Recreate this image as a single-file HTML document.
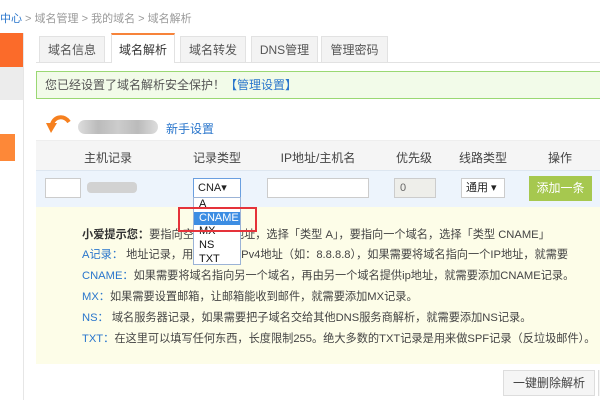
<!DOCTYPE html>
<html><head><meta charset="utf-8"><style>
*{margin:0;padding:0;box-sizing:border-box}
html,body{width:600px;height:400px;overflow:hidden}
body{background:#fff;font-family:"Liberation Sans","Noto Sans CJK SC",sans-serif;font-size:12px;color:#333;position:relative}
.a{position:absolute}
.tab{position:absolute;top:36px;height:26px;background:#f3f3f3;border:1px solid #e2e2e2;border-bottom:none;text-align:center;line-height:26px;font-size:12px;color:#555}
.th{position:absolute;top:149px;font-size:12px;color:#444;transform:translateX(-50%)}
.inp{position:absolute;top:178px;height:20px;background:#fff;border:1px solid #ccc}
.tip{position:absolute;left:46px;font-size:11.2px;color:#444;white-space:nowrap}
.b{color:#2a76cc}
</style></head><body>
<div class="a" style="left:0;top:10px;color:#999;font-size:11px;white-space:nowrap"><span class="b">中心</span> &gt; 域名管理 &gt; 我的域名 &gt; 域名解析</div>
<div class="a" style="left:23px;top:33px;width:1px;height:367px;background:#e6e6e6"></div>
<div class="a" style="left:0;top:33px;width:23px;height:34px;background:#fb6b2a"></div>
<div class="a" style="left:0;top:67px;width:23px;height:33px;background:#ececec"></div>
<div class="a" style="left:0;top:134px;width:15px;height:27px;background:#fd8838"></div>

<div class="tab" style="left:39px;width:66px">域名信息</div>
<div class="tab" style="left:111px;width:64px;top:33px;height:30px;line-height:30px;background:#fff;border-top:2px solid #f7833a;color:#333;z-index:2">域名解析</div>
<div class="tab" style="left:180px;width:66px">域名转发</div>
<div class="tab" style="left:251px;width:67px">DNS管理</div>
<div class="tab" style="left:321px;width:67px">管理密码</div>
<div class="a" style="left:36px;top:62px;width:564px;height:1px;background:#e2e2e2"></div>

<div class="a" style="left:36px;top:71px;width:570px;height:28px;background:#f2fbe9;border:1px solid #9ad873;line-height:26px;padding-left:8px;color:#555">您已经设置了域名解析安全保护！<span class="b">【管理设置】</span></div>

<svg class="a" style="left:44px;top:113px" width="28" height="24" viewBox="0 0 28 24"><path d="M25 9 C20 2 11 3 8 11" stroke="#f6801f" stroke-width="4" fill="none"/><path d="M2 10 L13 10 L7 20 Z" fill="#f6801f"/></svg>
<div class="a" style="left:78px;top:120px;width:80px;height:14px;border-radius:7px;background:linear-gradient(90deg,#ddd,#bbb,#ccc,#bbb,#ddd)"></div>
<div class="a b" style="left:166px;top:120px">新手设置</div>

<div class="a" style="left:36px;top:140px;width:564px;height:30px;background:#f5f5f5;border-top:1px solid #eee"></div>
<div class="th" style="left:108px">主机记录</div>
<div class="th" style="left:217px">记录类型</div>
<div class="th" style="left:318px">IP地址/主机名</div>
<div class="th" style="left:414px">优先级</div>
<div class="th" style="left:483px">线路类型</div>
<div class="th" style="left:560px">操作</div>

<div class="a" style="left:36px;top:170px;width:564px;height:37px;background:#edf4fc;border-top:1px solid #dde6f0"></div>
<div class="inp" style="left:45px;width:36px"></div>
<div class="a" style="left:87px;top:182px;width:50px;height:11px;background:#d2d2d2;border-radius:4px"></div>
<div class="inp" style="left:193px;width:48px;border-color:#6a9fe0;line-height:18px;padding-left:4px;font-size:11px;color:#222">CNA▾</div>
<div class="inp" style="left:267px;width:102px"></div>
<div class="inp" style="left:394px;width:42px;background:#eeeeea;line-height:18px;padding-left:5px;color:#666;font-size:11px">0</div>
<div class="inp" style="left:461px;width:44px;line-height:18px;padding-left:4px;font-size:11px;color:#222">通用 ▾</div>
<div class="a" style="left:529px;top:176px;width:63px;height:25px;background:#a6c84f;color:#fff;text-align:center;line-height:25px">添加一条</div>

<div class="a" style="left:36px;top:207px;width:564px;height:157px;background:#fdfde8;overflow:hidden">
<div class="tip" style="top:19px"><b style="color:#333">小爱提示您：</b>要指向空···的 IP 地址，选择「类型 A」，要指向一个域名，选择「类型 CNAME」</div>
<div class="tip" style="top:39px"><span class="b">A记录：</span> 地址记录，用······名的IPv4地址（如：8.8.8.8），如果需要将域名指向一个IP地址，就需要</div>
<div class="tip" style="top:60px"><span class="b">CNAME：</span>如果需要将域名指向另一个域名，再由另一个域名提供ip地址，就需要添加CNAME记录。</div>
<div class="tip" style="top:81px"><span class="b">MX：</span>如果需要设置邮箱，让邮箱能收到邮件，就需要添加MX记录。</div>
<div class="tip" style="top:102px"><span class="b">NS：</span> 域名服务器记录，如果需要把子域名交给其他DNS服务商解析，就需要添加NS记录。</div>
<div class="tip" style="top:123px"><span class="b">TXT：</span>在这里可以填写任何东西，长度限制255。绝大多数的TXT记录是用来做SPF记录（反垃圾邮件）。</div>
</div>

<div class="a" style="left:193px;top:197px;width:48px;height:68px;background:#fff;border:1px solid #9bb3d6;font-size:11px;color:#111;line-height:13px">
<div style="padding-left:5px;height:14px">A</div>
<div style="padding-left:5px;height:13px;background:#3c8de3;color:#fff">CNAME</div>
<div style="padding-left:5px;height:14px">MX</div>
<div style="padding-left:5px;height:14px">NS</div>
<div style="padding-left:5px;height:14px">TXT</div>
</div>
<div class="a" style="left:178px;top:207px;width:79px;height:25px;border:2px solid #e5333a"></div>

<div class="a" style="left:503px;top:370px;width:92px;height:26px;background:#f5f5f5;border:1px solid #ddd;text-align:center;line-height:24px;color:#444">一键删除解析</div>
<div class="a" style="left:598px;top:370px;width:2px;height:26px;border-left:1px solid #ddd;background:#f5f5f5"></div>
</body></html>
